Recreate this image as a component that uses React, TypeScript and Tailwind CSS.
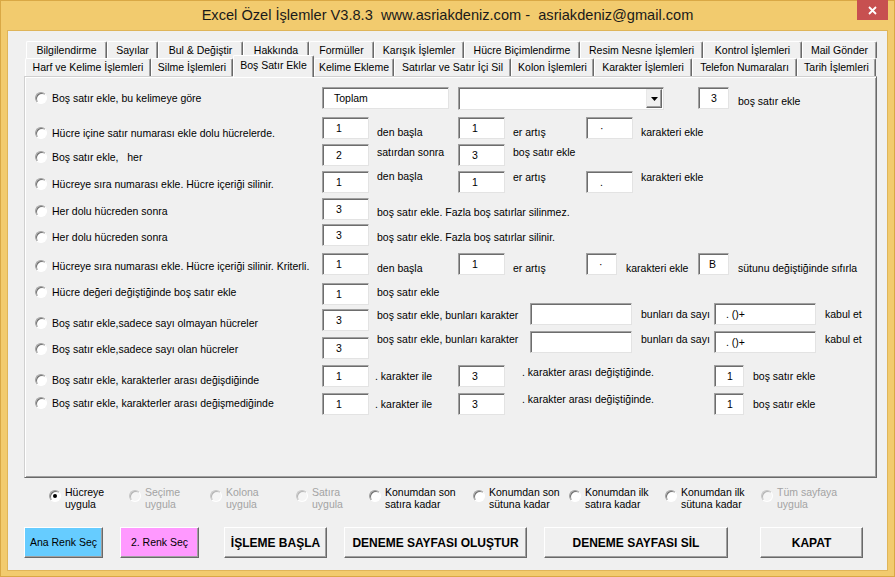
import React from "react";

type P = { className?: string; children?: React.ReactNode };

const Radio = ({ checked, disabled, className = "" }: { checked?: boolean; disabled?: boolean; className?: string }) => (
  <span
    className={`flex h-[12px] w-[12px] shrink-0 items-center justify-center rounded-full border ${
      disabled
        ? "border-[#c6c6c6] border-b-white border-r-white bg-[#f5f5f5] shadow-[inset_1px_1px_0_#b4b4b4]"
        : "border-[#a0a0a0] border-b-white border-r-white bg-white shadow-[inset_1px_1px_0_#707070]"
    } ${className}`}
  >
    {checked && <span className="h-[4px] w-[4px] rounded-full bg-black" />}
  </span>
);

const Field = ({ className = "", children }: P) => (
  <div
    className={`flex h-[22px] shrink-0 items-center border border-[#a0a0a0] border-b-[#e3e3e3] border-r-[#e3e3e3] bg-white text-[10.5px] leading-[14px] shadow-[inset_1px_1px_0_#6d6d6d] ${className}`}
  >
    {children}
  </div>
);

const T = ({ className = "", children }: P) => (
  <span className={`shrink-0 whitespace-nowrap text-[10.5px] leading-[14px] ${className}`}>{children}</span>
);

const Opt = ({ className = "", children }: P) => (
  <div className={`flex h-[14px] w-[297px] shrink-0 items-center pl-[10px] ${className}`}>
    <Radio />
    <span className="ml-[5px] whitespace-nowrap text-[10.5px] leading-[14px]">{children}</span>
  </div>
);

const Tab = ({ className = "", children }: P) => (
  <div
    className={`flex shrink-0 items-center justify-center rounded-t-[2px] border-l border-t border-r border-white border-r-[#696969] bg-[#f0f0f0] text-[10.5px] leading-[13px] whitespace-nowrap shadow-[inset_-1px_0_0_#a0a0a0] ${className}`}
  >
    {children}
  </div>
);

const BottomOpt = ({ className = "", checked, disabled, children }: P & { checked?: boolean; disabled?: boolean }) => (
  <div className={`flex shrink-0 items-start ${className}`}>
    <Radio checked={checked} disabled={disabled} className="mt-[4px]" />
    <span className={`ml-[4px] whitespace-nowrap text-[10.5px] leading-[12px] ${disabled ? "text-[#a3a3a3]" : "text-black"}`}>
      {children}
    </span>
  </div>
);

const Btn = ({ className = "", children }: P) => (
  <div
    className={`flex h-[31px] shrink-0 items-center justify-center border border-white border-b-[#696969] border-r-[#696969] shadow-[inset_-1px_-1px_0_#a0a0a0] whitespace-nowrap ${className}`}
  >
    {children}
  </div>
);

export default function App() {
  return (
    <div className="flex h-[577px] w-[895px] flex-col bg-[#f2cb6e] font-['Liberation_Sans',Arial,sans-serif] text-black shadow-[inset_0_0_0_1px_#d9a845]">
      {/* title bar */}
      <div className="grid h-[31px] shrink-0 grid-cols-[1fr_auto_1fr] items-start">
        <div />
        <div className="mt-[5px] whitespace-pre text-[14.6px] leading-[20px] text-[#1a1a1a]">
          Excel Özel İşlemler V3.8.3  www.asriakdeniz.com -  asriakdeniz@gmail.com
        </div>
        <div className="flex justify-end pr-[7px]">
          <div className="flex h-[20px] w-[31px] items-center justify-center bg-[#c75050]">
            <svg width="9" height="9" viewBox="0 0 9 9">
              <path d="M1 1L8 8M8 1L1 8" stroke="#fff" strokeWidth="1.8" />
            </svg>
          </div>
        </div>
      </div>

      {/* client area */}
      <div className="mx-[8px] flex h-[539px] shrink-0 flex-col bg-[#f0f0f0] shadow-[0_0_0_1px_#dfb55a]">
        {/* tabs row 1 */}
        <div className="ml-[18px] mt-[10px] flex h-[17px]">
          <Tab className="w-[81px]">Bilgilendirme</Tab>
          <Tab className="w-[51px]">Sayılar</Tab>
          <Tab className="w-[85px]">Bul &amp; Değiştir</Tab>
          <Tab className="w-[66px]">Hakkında</Tab>
          <Tab className="w-[65px]">Formüller</Tab>
          <Tab className="w-[90px]">Karışık İşlemler</Tab>
          <Tab className="w-[116px]">Hücre Biçimlendirme</Tab>
          <Tab className="w-[123px]">Resim Nesne İşlemleri</Tab>
          <Tab className="w-[99px]">Kontrol İşlemleri</Tab>
          <Tab className="w-[75px]">Mail Gönder</Tab>
        </div>
        {/* tabs row 2 */}
        <div className="ml-[17px] flex h-[18px] items-end">
          <Tab className="h-[18px] w-[126px]">Harf ve Kelime İşlemleri</Tab>
          <Tab className="h-[18px] w-[82px]">Silme İşlemleri</Tab>
          <Tab className="relative z-10 -mb-[1px] h-[22px] w-[81px] items-start pt-[3px]">Boş Satır Ekle</Tab>
          <Tab className="h-[18px] w-[80px]">Kelime Ekleme</Tab>
          <Tab className="h-[18px] w-[117px]">Satırlar ve Satır İçi Sil</Tab>
          <Tab className="h-[18px] w-[83px]">Kolon İşlemleri</Tab>
          <Tab className="h-[18px] w-[98px]">Karakter İşlemleri</Tab>
          <Tab className="h-[18px] w-[105px]">Telefon Numaraları</Tab>
          <Tab className="h-[18px] w-[79px]">Tarih İşlemleri</Tab>
        </div>

        {/* tab page */}
        <div className="ml-[16px] flex h-[402px] w-[853px] shrink-0 flex-col border border-[#d0d0d0] border-b-[#696969] border-r-[#696969] shadow-[inset_1px_1px_0_#fff,inset_-1px_-1px_0_#a0a0a0]">
          <div className="mt-[9px] flex h-[30px] items-start">
            <Opt className="mt-[5px]">Boş satır ekle, bu kelimeye göre</Opt>
            <Field className="mt-[1px] w-[127px] pl-[11px]">Toplam</Field>
            <div className="ml-[9px] mt-[1px] flex h-[23px] w-[206px] shrink-0 items-center justify-end border border-[#a0a0a0] border-b-[#e3e3e3] border-r-[#e3e3e3] bg-white pr-[1px] shadow-[inset_1px_1px_0_#6d6d6d]">
              <div className="flex h-[19px] w-[16px] items-center justify-center border border-[#e8e8e8] border-b-[#696969] border-r-[#696969] bg-[#f0f0f0] shadow-[inset_-1px_-1px_0_#a0a0a0]">
                <svg width="7" height="4" viewBox="0 0 7 4">
                  <path d="M0 0H7L3.5 4Z" fill="#000" />
                </svg>
              </div>
            </div>
            <Field className="ml-[34px] mt-[1px] w-[31px] pl-[12px]">3</Field>
            <T className="ml-[9px] mt-[8px]">boş satır ekle</T>
          </div>

          <div className="flex h-[28px] items-start">
            <Opt className="mt-[10px]">Hücre içine satır numarası ekle dolu hücrelerde.</Opt>
            <Field className="mt-[1px] w-[47px] pl-[13px]">1</Field>
            <T className="ml-[8px] mt-[9px] w-[81px]">den başla</T>
            <Field className="mt-[1px] w-[47px] pl-[13px]">1</Field>
            <T className="ml-[8px] mt-[9px] w-[73px]">er artış</T>
            <Field className="mt-[1px] w-[47px] pl-[13px]">·</Field>
            <T className="ml-[8px] mt-[9px]">karakteri ekle</T>
          </div>

          <div className="flex h-[25px] items-start">
            <Opt className="mt-[6px]">Boş satır ekle,&nbsp;&nbsp; her</Opt>
            <Field className="w-[47px] pl-[13px]">2</Field>
            <T className="ml-[8px] mt-[1px] w-[81px]">satırdan sonra</T>
            <Field className="w-[47px] pl-[13px]">3</Field>
            <T className="ml-[8px] mt-[1px]">boş satır ekle</T>
          </div>

          <div className="flex h-[28px] items-start">
            <Opt className="mt-[8px]">Hücreye sıra numarası ekle. Hücre içeriği silinir.</Opt>
            <Field className="mt-[2px] w-[47px] pl-[13px]">1</Field>
            <T className="ml-[8px] w-[81px]">den başla</T>
            <Field className="mt-[2px] w-[47px] pl-[13px]">1</Field>
            <T className="ml-[8px] mt-[1px] w-[73px]">er artış</T>
            <Field className="mt-[2px] w-[47px] pl-[13px]">.</Field>
            <T className="ml-[8px] mt-[1px]">karakteri ekle</T>
          </div>

          <div className="flex h-[26px] items-start">
            <Opt className="mt-[7px]">Her dolu hücreden sonra</Opt>
            <Field className="mt-[1px] w-[47px] pl-[13px]">3</Field>
            <T className="ml-[8px] mt-[8px]">boş satır ekle. Fazla boş satırlar silinmez.</T>
          </div>

          <div className="flex h-[29px] items-start">
            <Opt className="mt-[7px]">Her dolu hücreden sonra</Opt>
            <Field className="mt-[1px] w-[47px] pl-[13px]">3</Field>
            <T className="ml-[8px] mt-[7px]">boş satır ekle. Fazla boş satırlar silinir.</T>
          </div>

          <div className="flex h-[30px] items-start">
            <Opt className="mt-[7px]">Hücreye sıra numarası ekle. Hücre içeriği silinir. Kriterli.</Opt>
            <Field className="mt-[1px] w-[47px] pl-[13px]">1</Field>
            <T className="ml-[8px] mt-[9px] w-[81px]">den başla</T>
            <Field className="mt-[1px] w-[47px] pl-[13px]">1</Field>
            <T className="ml-[8px] mt-[9px] w-[73px]">er artış</T>
            <Field className="mt-[1px] w-[31px] pl-[12px]">·</Field>
            <T className="ml-[9px] mt-[9px] w-[72px]">karakteri ekle</T>
            <Field className="mt-[1px] w-[31px] pl-[10px]">B</Field>
            <T className="ml-[9px] mt-[9px]">sütunu değiştiğinde sıfırla</T>
          </div>

          <div className="flex h-[20px] items-start">
            <Opt className="mt-[3px]">Hücre değeri değiştiğinde boş satır ekle</Opt>
            <Field className="mt-[1px] w-[47px] pl-[13px]">1</Field>
            <T className="ml-[8px] mt-[3px]">boş satır ekle</T>
          </div>

          <div className="flex h-[27px] items-start">
            <Opt className="mt-[14px]">Boş satır ekle,sadece sayı olmayan hücreler</Opt>
            <Field className="mt-[7px] w-[47px] pl-[13px]">3</Field>
            <T className="ml-[8px] mt-[6px] w-[153px]">boş satır ekle, bunları karakter</T>
            <Field className="mt-[1px] w-[102px]" />
            <T className="ml-[9px] mt-[5px] w-[73px]">bunları da sayı</T>
            <Field className="mt-[1px] w-[102px] pl-[11px]">. ()+</Field>
            <T className="ml-[9px] mt-[5px]">kabul et</T>
          </div>

          <div className="flex h-[35px] items-start">
            <Opt className="mt-[13px]">Boş satır ekle,sadece sayı olan hücreler</Opt>
            <Field className="mt-[8px] w-[47px] pl-[13px]">3</Field>
            <T className="ml-[8px] mt-[3px] w-[153px]">boş satır ekle, bunları karakter</T>
            <Field className="mt-[2px] w-[102px]" />
            <T className="ml-[9px] mt-[3px] w-[73px]">bunları da sayı</T>
            <Field className="mt-[2px] w-[102px] pl-[11px]">. ()+</Field>
            <T className="ml-[9px] mt-[3px]">kabul et</T>
          </div>

          <div className="flex h-[28px] items-start">
            <Opt className="mt-[9px]">Boş satır ekle, karakterler arası değişdiğinde</Opt>
            <Field className="mt-[1px] w-[47px] pl-[13px]">1</Field>
            <T className="ml-[6px] mt-[5px] w-[83px]">. karakter ile</T>
            <Field className="mt-[1px] w-[47px] pl-[13px]">3</Field>
            <T className="ml-[17px] mt-[1px] w-[192px]">. karakter arası değiştiğinde.</T>
            <Field className="mt-[1px] w-[30px] pl-[12px]">1</Field>
            <T className="ml-[9px] mt-[5px]">boş satır ekle</T>
          </div>

          <div className="flex h-[28px] items-start">
            <Opt className="mt-[4px]">Boş satır ekle, karakterler arası değişmediğinde</Opt>
            <Field className="mt-[1px] w-[47px] pl-[13px]">1</Field>
            <T className="ml-[6px] mt-[5px] w-[83px]">. karakter ile</T>
            <Field className="mt-[1px] w-[47px] pl-[13px]">3</Field>
            <T className="ml-[17px] w-[192px]">. karakter arası değiştiğinde.</T>
            <Field className="mt-[1px] w-[30px] pl-[12px]">1</Field>
            <T className="ml-[9px] mt-[5px]">boş satır ekle</T>
          </div>
        </div>

        {/* apply-to options */}
        <div className="ml-[41px] mt-[8px] flex h-[24px] shrink-0">
          <BottomOpt className="w-[80px]" checked>
            Hücreye
            <br />
            uygula
          </BottomOpt>
          <BottomOpt className="w-[81px]" disabled>
            Seçime
            <br />
            uygula
          </BottomOpt>
          <BottomOpt className="w-[86px]" disabled>
            Kolona
            <br />
            uygula
          </BottomOpt>
          <BottomOpt className="w-[73px]" disabled>
            Satıra
            <br />
            uygula
          </BottomOpt>
          <BottomOpt className="w-[104px]">
            Konumdan son
            <br />
            satıra kadar
          </BottomOpt>
          <BottomOpt className="w-[96px]">
            Konumdan son
            <br />
            sütuna kadar
          </BottomOpt>
          <BottomOpt className="w-[96px]">
            Konumdan ilk
            <br />
            satıra kadar
          </BottomOpt>
          <BottomOpt className="w-[96px]">
            Konumdan ilk
            <br />
            sütuna kadar
          </BottomOpt>
          <BottomOpt disabled>
            Tüm sayfaya
            <br />
            uygula
          </BottomOpt>
        </div>

        {/* buttons */}
        <div className="ml-[16px] mt-[17px] flex h-[31px] shrink-0">
          <Btn className="w-[79px] bg-[#66ccff] text-[10.5px]">Ana Renk Seç</Btn>
          <Btn className="ml-[17px] w-[79px] bg-[#ff99ff] text-[10.5px]">2. Renk Seç</Btn>
          <Btn className="ml-[25px] w-[103px] bg-[#f0f0f0] text-[12px] font-bold">İŞLEME BAŞLA</Btn>
          <Btn className="ml-[17px] w-[183px] bg-[#f0f0f0] text-[12px] font-bold">DENEME SAYFASI OLUŞTUR</Btn>
          <Btn className="ml-[17px] w-[184px] bg-[#f0f0f0] text-[12px] font-bold">DENEME SAYFASI SİL</Btn>
          <Btn className="ml-[32px] w-[103px] bg-[#f0f0f0] text-[12px] font-bold">KAPAT</Btn>
        </div>
      </div>
    </div>
  );
}
